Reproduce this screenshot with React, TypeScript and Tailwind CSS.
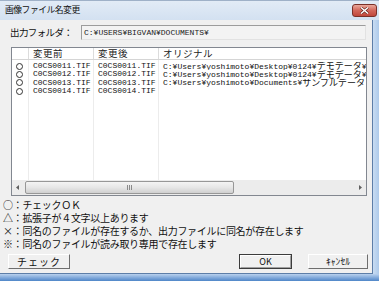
import React from "react";

const jp = { fontFamily: '"Noto Sans CJK JP", "Noto Sans", sans-serif' };
const mono = { fontFamily: '"Liberation Mono", "Noto Sans CJK JP", monospace' };

function MixedText({ text }: { text: string }) {
  const parts: { s: string; cjk: boolean }[] = [];
  for (const ch of text) {
    const cjk = ch.charCodeAt(0) > 0x2000;
    const last = parts[parts.length - 1];
    if (last && last.cjk === cjk) last.s += ch;
    else parts.push({ s: ch, cjk });
  }
  return (
    <>
      {parts.map((p, i) =>
        p.cjk ? (
          <span key={i} className="text-[9px] leading-[8px] relative top-[0.5px]" style={jp}>
            {p.s}
          </span>
        ) : (
          <span key={i}>{p.s}</span>
        )
      )}
    </>
  );
}

const rows = [
  ["C0CS0011.TIF", "C0CS0011.TIF", "C:¥Users¥yoshimoto¥Desktop¥0124¥デモデータ¥"],
  ["C0CS0012.TIF", "C0CS0012.TIF", "C:¥Users¥yoshimoto¥Desktop¥0124¥デモデータ¥"],
  ["C0CS0013.TIF", "C0CS0013.TIF", "C:¥Users¥yoshimoto¥Documents¥サンプルデータ"],
  ["C0CS0014.TIF", "C0CS0014.TIF", ""],
];

export default function App() {
  return (
    <div className="w-[379px] h-[281px] relative overflow-hidden flex flex-col bg-[#c3d8ef]" style={jp}>
      {/* title bar */}
      <div className="h-[20px] shrink-0 flex items-center pl-[5px] bg-gradient-to-b from-[#e2ebf6] to-[#d3e1f1] border-t border-[#9fb1c8]">
        <span className="text-[8.8px] tracking-[-0.5px] text-[#111] leading-none">画像ファイル名変更</span>
      </div>
      <div className="absolute left-[352px] top-[4px] w-[25px] h-[13px] rounded-[3px] border border-[#7a3028] bg-gradient-to-b from-[#e9a89c] via-[#d2665a] to-[#c0463a] flex items-center justify-center">
        <svg width="9" height="7" viewBox="0 0 9 7">
          <path d="M1 0.5 L8 6.5 M8 0.5 L1 6.5" stroke="#5a1a14" strokeWidth="2.6" />
          <path d="M1 0.5 L8 6.5 M8 0.5 L1 6.5" stroke="#ffffff" strokeWidth="1.5" />
        </svg>
      </div>

      <div className="flex-1 flex min-h-0">
        {/* content */}
        <div className="w-[373px] shrink-0 bg-[#f0f0f0] border-r border-b border-[#5d7ea8] flex flex-col">
          {/* output folder */}
          <div className="mt-[5px] h-[15px] flex items-center">
            <span className="w-[81px] shrink-0 pl-[10px] text-[9.5px] tracking-[-0.6px] text-[#111] leading-none whitespace-nowrap">
              出力フォルダ：
            </span>
            <div
              className="w-[285px] h-[15px] bg-[#f3f3f3] border-t border-l border-[#9c9c9c] border-r border-b border-r-[#e2e2e2] border-b-[#e2e2e2] flex items-center pl-[2px] text-[8px] text-[#222] leading-none"
              style={mono}
            >
              C:¥USERS¥BIGVAN¥DOCUMENTS¥
            </div>
          </div>

          {/* list view */}
          <div className="mt-[7px] ml-[11px] w-[356px] h-[149px] border border-[#828790] bg-white flex flex-col overflow-hidden">
            {/* header */}
            <div className="h-[12px] shrink-0 flex border-b border-[#d5d5d5] bg-white text-[9.5px] text-[#222] leading-none">
              <div className="w-[17px] shrink-0 border-r border-[#dcdcdc]" />
              <div className="w-[65px] shrink-0 border-r border-[#dcdcdc] pl-[4px] flex items-center tracking-[0.5px]">変更前</div>
              <div className="w-[65px] shrink-0 border-r border-[#dcdcdc] pl-[4px] flex items-center tracking-[0.5px]">変更後</div>
              <div className="flex-1 pl-[4px] flex items-center tracking-[0.5px] whitespace-nowrap">オリジナル</div>
            </div>
            {/* body */}
            <div className="flex-1 relative flex">
              <div className="w-[17px] shrink-0 border-r border-[#ececec]" />
              <div className="w-[65px] shrink-0 border-r border-[#ececec]" />
              <div className="w-[65px] shrink-0 border-r border-[#ececec]" />
              <div className="flex-1" />
              <div className="absolute inset-0 pt-[2px] flex flex-col">
                {rows.map((r, i) => (
                  <div key={i} className="h-[8.33px] flex items-center text-[8px] text-[#111] leading-[8px] whitespace-nowrap" style={mono}>
                    <div className="w-[17px] shrink-0 pl-[4px] flex items-center">
                      <div className="w-[7px] h-[7px] rounded-full border border-[#333]" />
                    </div>
                    <div className="w-[65px] shrink-0 pl-[4px]">{r[0]}</div>
                    <div className="w-[65px] shrink-0 pl-[4px]">{r[1]}</div>
                    <div className="flex-1 pl-[4px] h-[8.33px] overflow-hidden flex items-center">
                      <span className="whitespace-nowrap leading-[8px]">
                        <MixedText text={r[2]} />
                      </span>
                    </div>
                  </div>
                ))}
              </div>
            </div>
            {/* horizontal scrollbar */}
            <div className="h-[15px] shrink-0 bg-[#ececec] flex items-center">
              <div className="w-[12px] shrink-0 flex items-center justify-center">
                <svg width="4" height="5" viewBox="0 0 4 5">
                  <path d="M3 0 L0 2.5 L3 5 Z" fill="#606060" />
                </svg>
              </div>
              <div className="w-[209px] h-[13px] ml-[1px] rounded-[2px] border border-[#979797] bg-gradient-to-b from-[#f4f4f4] via-[#e6e6e6] to-[#d0d0d0] flex items-center justify-center gap-[1px]">
                <div className="w-[1px] h-[5px] bg-[#8a8a8a]" />
                <div className="w-[1px] h-[5px] bg-[#8a8a8a]" />
                <div className="w-[1px] h-[5px] bg-[#8a8a8a]" />
              </div>
              <div className="flex-1" />
              <div className="w-[12px] shrink-0 flex items-center justify-center">
                <svg width="4" height="5" viewBox="0 0 4 5">
                  <path d="M1 0 L4 2.5 L1 5 Z" fill="#606060" />
                </svg>
              </div>
            </div>
          </div>

          {/* legend */}
          <div className="mt-[2px] pl-[3px] text-[10px] tracking-[-0.3px] text-[#111] whitespace-nowrap">
            <div className="h-[13px] leading-[13px]">○：チェックＯＫ</div>
            <div className="h-[13px] leading-[13px]">△：拡張子が４文字以上あります</div>
            <div className="h-[13px] leading-[13px]">×：同名のファイルが存在するか、出力ファイルに同名が存在します</div>
            <div className="h-[13px] leading-[13px]">※：同名のファイルが読み取り専用で存在します</div>
          </div>

          {/* buttons */}
          <div className="mt-[4px] h-[15px] flex">
            <div className="ml-[8px] w-[62px] h-[15px] bg-[#f0f0f0] border-t border-l border-white border-r border-b border-r-[#6e6e6e] border-b-[#6e6e6e] flex items-center justify-center text-[10px] tracking-[1px] text-[#111] leading-none">
              チェック
            </div>
            <div className="ml-[169px] w-[53px] h-[15px] border border-[#3c3c3c] bg-[#f0f0f0] p-0">
              <div className="w-full h-full border-t border-l border-white border-r border-b border-r-[#a0a0a0] border-b-[#a0a0a0] flex items-center justify-center text-[9px] text-[#111] leading-none">
                OK
              </div>
            </div>
            <div className="ml-[16px] w-[60px] h-[15px] bg-[#f0f0f0] border-t border-l border-white border-r border-b border-r-[#6e6e6e] border-b-[#6e6e6e] flex items-center justify-center text-[9.6px] text-[#111] leading-none">
              ｷｬﾝｾﾙ
            </div>
          </div>
        </div>
        {/* right frame */}
        <div className="flex-1 bg-gradient-to-r from-[#c8dcf2] to-[#aecaea]" />
      </div>
      {/* bottom frame */}
      <div className="h-[7px] shrink-0 bg-gradient-to-b from-[#b9d1ee] to-[#4f86c8]" />
    </div>
  );
}
